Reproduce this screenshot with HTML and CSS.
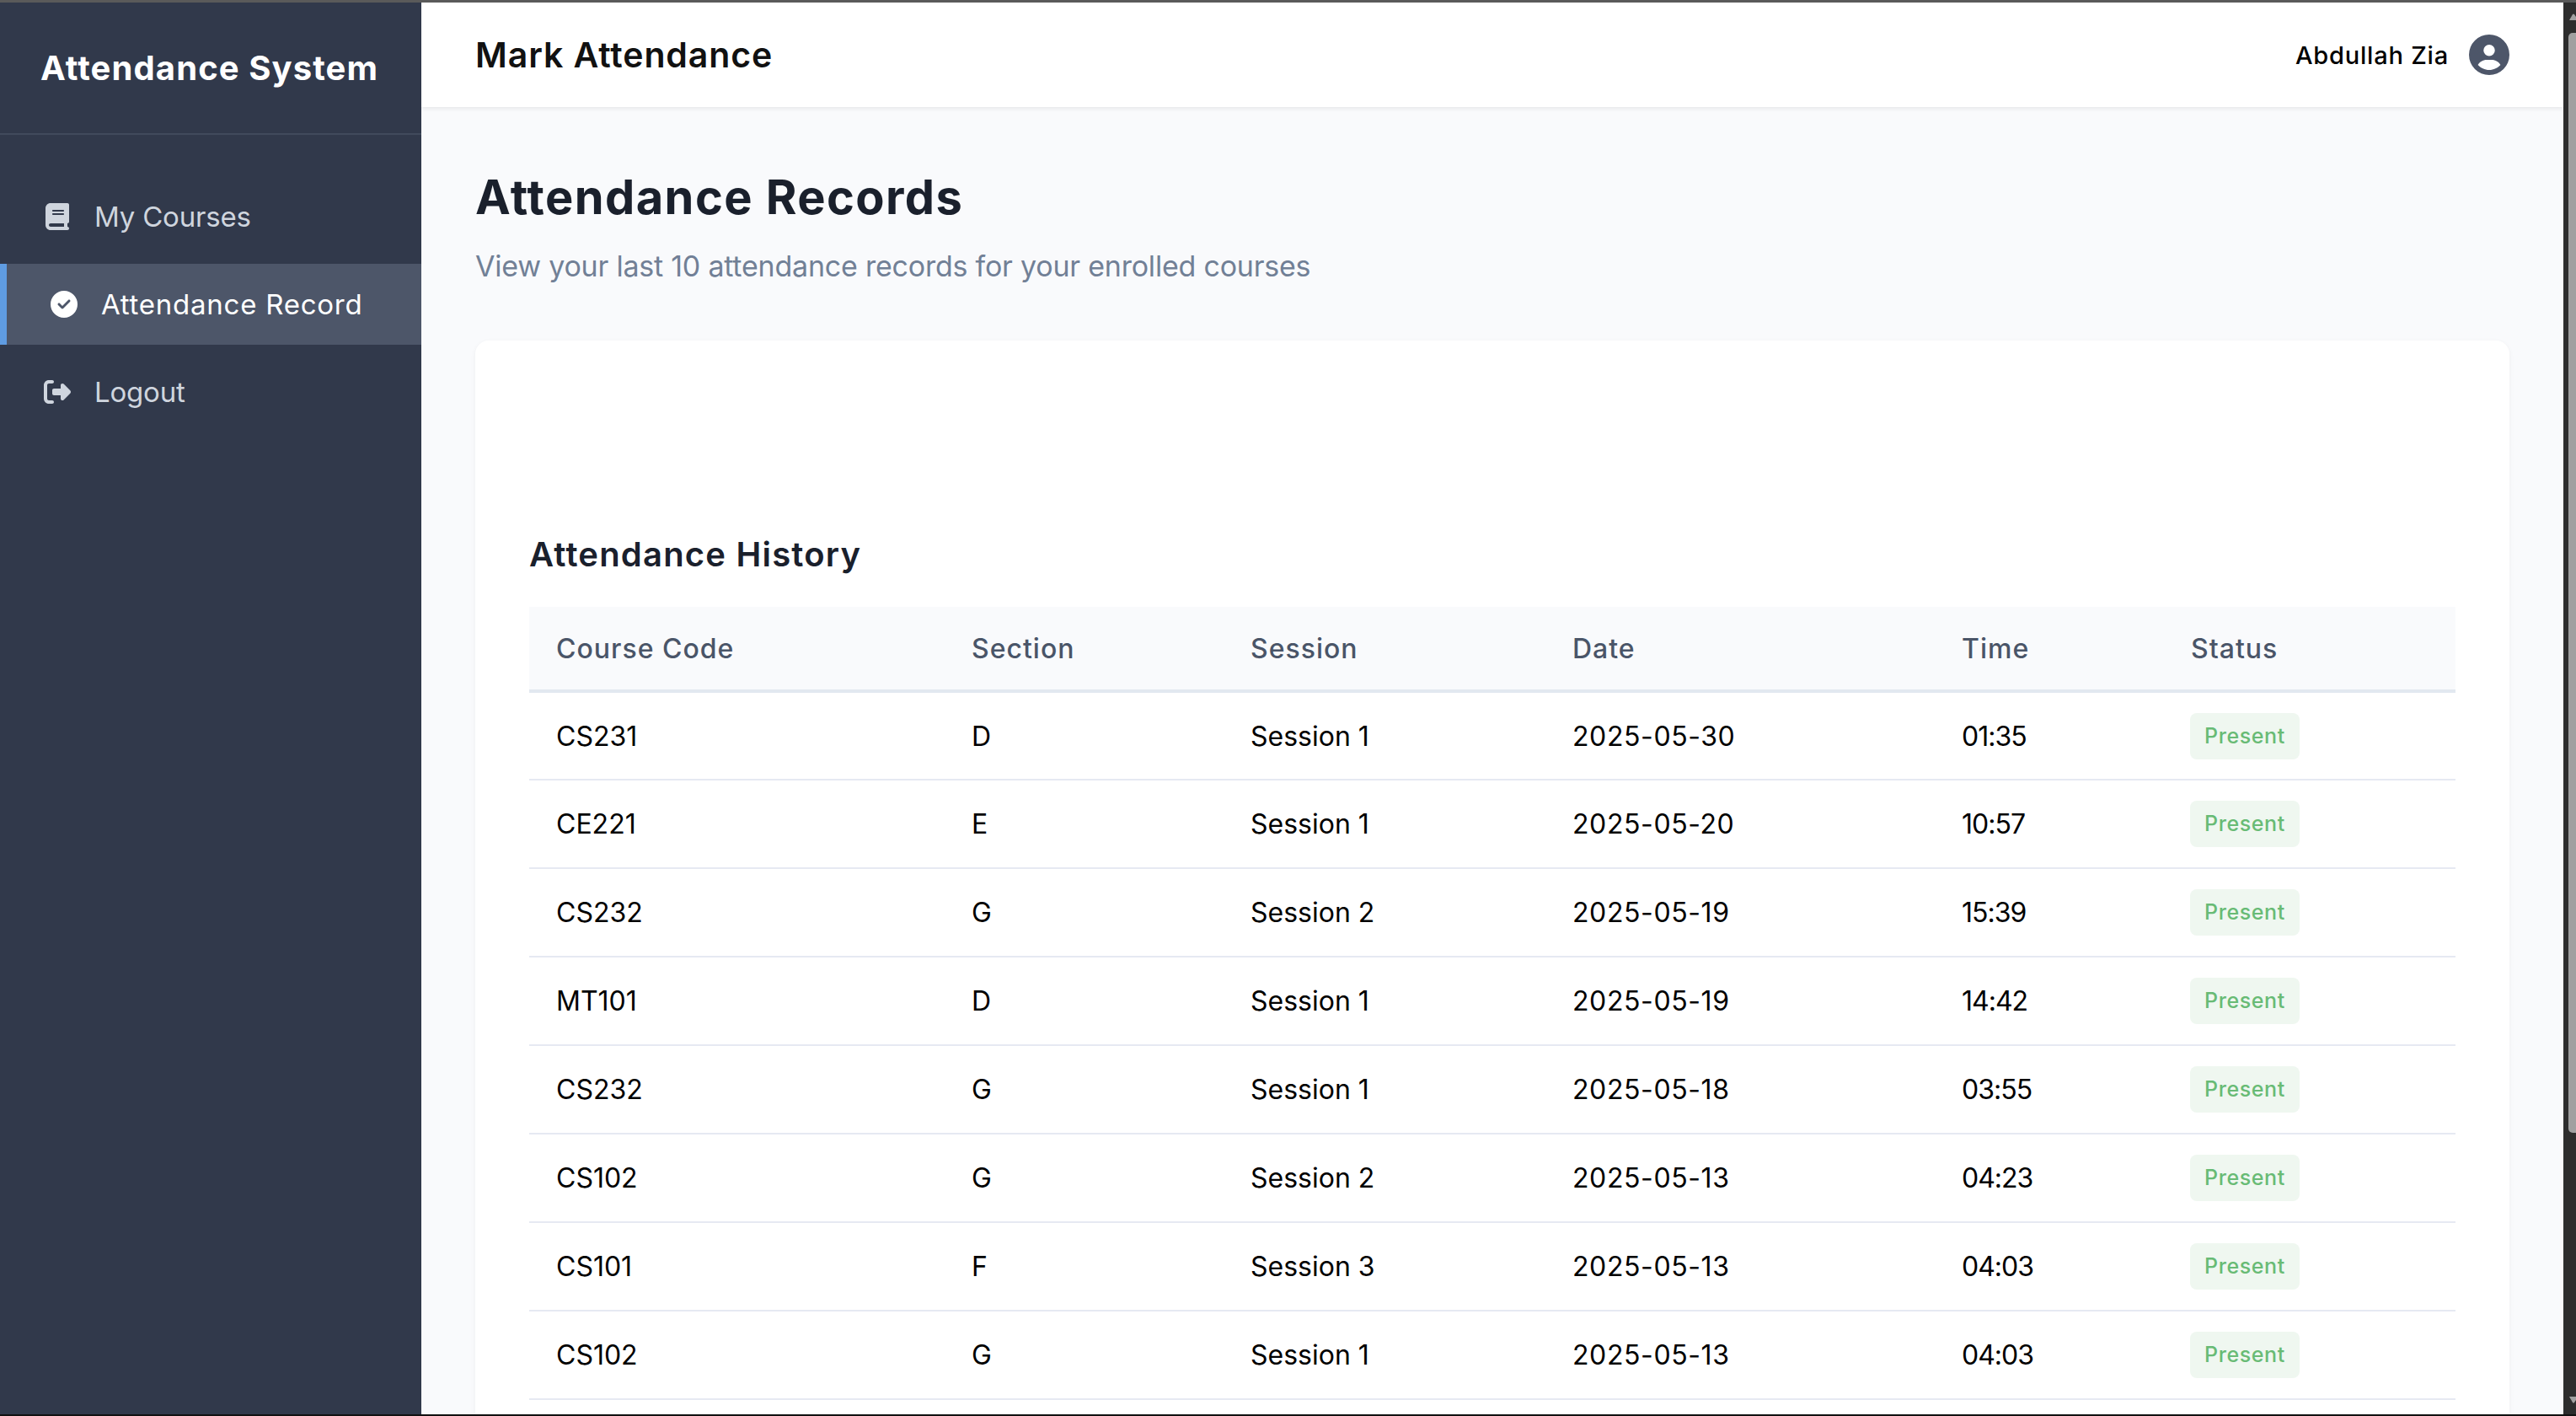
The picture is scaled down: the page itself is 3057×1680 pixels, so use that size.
FILE: index.html
```html
<!DOCTYPE html>
<html lang="en">
<head>
    <meta charset="UTF-8">
    <meta name="viewport" content="width=device-width, initial-scale=1.0">
    <title>Mark Attendance</title>
    <link rel="stylesheet" href="styles.css">
</head>
<body>
    <div class="window">
        <aside class="sidebar">
            <div class="logo">Attendance System</div>
            <nav class="nav">
                <a class="nav-item" href="#">
                    <span class="nav-icon">
                        <svg class="icon-book" viewBox="0 0 448 512"><path d="M96 0C43 0 0 43 0 96V416c0 53 43 96 96 96H384h32c17.7 0 32-14.3 32-32s-14.3-32-32-32V384c17.7 0 32-14.3 32-32V32c0-17.7-14.3-32-32-32H384 96zm0 384H352v64H96c-17.7 0-32-14.3-32-32s14.3-32 32-32zm32-240c0-8.8 7.2-16 16-16H336c8.8 0 16 7.2 16 16s-7.2 16-16 16H144c-8.8 0-16-7.2-16-16zm16 48H336c8.8 0 16 7.2 16 16s-7.2 16-16 16H144c-8.8 0-16-7.2-16-16s7.2-16 16-16z"/></svg>
                    </span>
                    My Courses
                </a>
                <a class="nav-item active" href="#">
                    <span class="nav-icon">
                        <svg class="icon-check" viewBox="0 0 512 512"><path d="M256 512A256 256 0 1 0 256 0a256 256 0 1 0 0 512zM369 209L241 337c-9.4 9.4-24.6 9.4-33.9 0l-64-64c-9.4-9.4-9.4-24.6 0-33.9s24.6-9.4 33.9 0l47 47L335 175c9.4-9.4 24.6-9.4 33.9 0s9.4 24.6 0 33.9z"/></svg>
                    </span>
                    Attendance Record
                </a>
                <a class="nav-item" href="#">
                    <span class="nav-icon">
                        <svg class="icon-logout" viewBox="0 32 512 448"><path d="M377.9 105.9L500.7 228.7c7.2 7.2 11.3 17.1 11.3 27.3s-4.1 20.1-11.3 27.3L377.9 406.1c-6.4 6.4-15 9.9-24 9.9c-18.7 0-33.9-15.2-33.9-33.9l0-62.1-128 0c-17.7 0-32-14.3-32-32l0-64c0-17.7 14.3-32 32-32l128 0 0-62.1c0-18.7 15.2-33.9 33.9-33.9c9 0 17.6 3.6 24 9.9zM160 96L96 96c-17.7 0-32 14.3-32 32l0 256c0 17.7 14.3 32 32 32l64 0c17.7 0 32 14.3 32 32s-14.3 32-32 32l-64 0c-53 0-96-43-96-96L0 128C0 75 43 32 96 32l64 0c17.7 0 32 14.3 32 32s-14.3 32-32 32z"/></svg>
                    </span>
                    Logout
                </a>
            </nav>
        </aside>

        <div class="main">
            <header class="topbar">
                <div class="topbar-title">Mark Attendance</div>
                <div class="user">
                    <span class="user-name">Abdullah Zia</span>
                    <svg class="user-icon" viewBox="0 0 512 512"><path d="M399 384.2C376.9 345.8 335.4 320 288 320H224c-47.4 0-88.9 25.8-111 64.2c35.2 39.2 86.2 63.8 143 63.8s107.8-24.7 143-63.8zM0 256a256 256 0 1 1 512 0A256 256 0 1 1 0 256zm256 16a72 72 0 1 0 0-144 72 72 0 1 0 0 144z"/></svg>
                </div>
            </header>

            <section class="content">
                <h1 class="page-title">Attendance Records</h1>
                <p class="page-sub">View your last 10 attendance records for your enrolled courses</p>

                <div class="card">
                    <h2 class="card-title">Attendance History</h2>
                    <table class="records">
                        <colgroup>
                            <col class="col-code"><col class="col-section"><col class="col-session">
                            <col class="col-date"><col class="col-time"><col class="col-status">
                        </colgroup>
                        <thead>
                            <tr><th>Course Code</th><th>Section</th><th>Session</th><th>Date</th><th>Time</th><th>Status</th></tr>
                        </thead>
                        <tbody>
                            <tr><td>CS231</td><td>D</td><td>Session 1</td><td class="cell-date">2025-05-30</td><td class="cell-time">01:35</td><td><span class="badge">Present</span></td></tr>
                            <tr><td>CE221</td><td>E</td><td>Session 1</td><td class="cell-date">2025-05-20</td><td class="cell-time">10:57</td><td><span class="badge">Present</span></td></tr>
                            <tr><td>CS232</td><td>G</td><td>Session 2</td><td class="cell-date">2025-05-19</td><td class="cell-time">15:39</td><td><span class="badge">Present</span></td></tr>
                            <tr><td>MT101</td><td>D</td><td>Session 1</td><td class="cell-date">2025-05-19</td><td class="cell-time">14:42</td><td><span class="badge">Present</span></td></tr>
                            <tr><td>CS232</td><td>G</td><td>Session 1</td><td class="cell-date">2025-05-18</td><td class="cell-time">03:55</td><td><span class="badge">Present</span></td></tr>
                            <tr><td>CS102</td><td>G</td><td>Session 2</td><td class="cell-date">2025-05-13</td><td class="cell-time">04:23</td><td><span class="badge">Present</span></td></tr>
                            <tr><td>CS101</td><td>F</td><td>Session 3</td><td class="cell-date">2025-05-13</td><td class="cell-time">04:03</td><td><span class="badge">Present</span></td></tr>
                            <tr><td>CS102</td><td>G</td><td>Session 1</td><td class="cell-date">2025-05-13</td><td class="cell-time">04:03</td><td><span class="badge">Present</span></td></tr>
                        </tbody>
                    </table>
                </div>
            </section>
        </div>

        <div class="scrollbar">
            <svg class="scroll-arrow" viewBox="0 0 9 10"><path d="M1 9 L5 2 Q6 1 7 2 L9 5 V9 Z"/></svg>
            <div class="scroll-thumb"></div>
            <svg class="scroll-arrow scroll-arrow-down" viewBox="0 0 9 10"><path d="M1 1 L5 8 Q6 9 7 8 L9 5 V1 Z"/></svg>
        </div>
    </div>
</body>
</html>
```

FILE: styles.css
```css
* {
    box-sizing: border-box;
}
html, body {
    margin: 0;
    height: 100%;
    overflow: hidden;
}
body {
    font-family: Inter, "Liberation Sans", sans-serif;
    background-color: #f9fafc;
    color: #000;
}
.window {
    display: flex;
    height: 1680px;
    border-top: 3px solid #5a5a5a;
    border-bottom: 2px solid #111;
}

/* sidebar */
.sidebar {
    width: 500px;
    flex-shrink: 0;
    background-color: #31394b;
}
.logo {
    height: 157px;
    padding: 53px 0 0 48px;
    border-bottom: 2px solid #414a5c;
    font-size: 40px;
    line-height: 50px;
    font-weight: 700;
    color: #fff;
    letter-spacing: 1.1px;
}
.nav {
    display: flex;
    flex-direction: column;
    gap: 8px;
    padding-top: 49px;
}
.nav-item {
    display: flex;
    align-items: center;
    height: 96px;
    padding-left: 48px;
    font-size: 33px;
    letter-spacing: -0.2px;
    color: #cfd5de;
    text-decoration: none;
}
.nav-item.active {
    border-left: 8px solid #5f9ce2;
    background-color: #4d5669;
    color: #fff;
    letter-spacing: 0.75px;
}
.nav-icon {
    display: flex;
    justify-content: center;
    width: 40px;
    margin-right: 24px;
}
.nav-icon svg {
    fill: currentColor;
    display: block;
}
.icon-book {
    width: 28px;
    height: 32px;
}
.icon-check {
    width: 32px;
    height: 32px;
}
.icon-logout {
    width: 32px;
    height: 28px;
}

/* top bar */
.main {
    flex: 1;
    min-width: 0;
    overflow: hidden;
}
.topbar {
    display: flex;
    justify-content: space-between;
    align-items: center;
    height: 124px;
    padding: 0 64px;
    background-color: #fff;
    box-shadow: 0 2px 5px rgba(0, 0, 0, 0.08);
    position: relative;
}
.topbar-title {
    font-size: 41px;
    font-weight: 600;
    color: #111;
    letter-spacing: 0.9px;
}
.user {
    display: flex;
    align-items: center;
    gap: 24px;
}
.user-name {
    font-size: 29px;
    font-weight: 500;
    letter-spacing: 0.8px;
}
.user-icon {
    width: 48px;
    height: 48px;
    fill: #4d5669;
}

/* page */
.content {
    padding: 77px 64px 0;
}
.page-title {
    margin: 0;
    font-size: 56px;
    line-height: 60px;
    font-weight: 700;
    color: #1a202c;
    letter-spacing: 1.4px;
}
.page-sub {
    margin: 32px 0 68px;
    font-size: 34px;
    line-height: 40px;
    color: #718096;
    letter-spacing: -0.22px;
}
.card {
    padding: 229px 64px 64px;
    background-color: #fff;
    border-radius: 16px;
    box-shadow: 0 2px 6px rgba(0, 0, 0, 0.05);
}
.card-title {
    margin: 0 0 37px;
    font-size: 40px;
    line-height: 50px;
    font-weight: 600;
    color: #1a202c;
    letter-spacing: 1.2px;
}

/* table */
.records {
    width: 100%;
    table-layout: fixed;
    border-collapse: collapse;
}
.col-code { width: 493px; }
.col-section { width: 331px; }
.col-session { width: 382px; }
.col-date { width: 462px; }
.col-time { width: 272px; }
.records th {
    height: 100px;
    padding: 0 31px 0 32px;
    text-align: left;
    font-size: 32px;
    font-weight: 500;
    color: #4a5568;
    background-color: #f9fafc;
    border-bottom: 4px solid #e2e8f0;
    letter-spacing: 1px;
}
.records td {
    height: 105px;
    padding: 0 31px 0 32px;
    font-size: 32px;
    border-bottom: 2px solid #e6e9f2;
}
.records td:last-child {
    padding-left: 31px;
}
.cell-date {
    letter-spacing: 0.6px;
}
.cell-time {
    letter-spacing: -1px;
}
.badge {
    display: inline-block;
    padding: 0 17px;
    line-height: 55px;
    font-size: 25px;
    font-weight: 500;
    color: #68bb75;
    background-color: #eff7f0;
    border-radius: 8px;
    vertical-align: middle;
    letter-spacing: 0.6px;
}

/* drawn scrollbar of the window */
.scrollbar {
    display: flex;
    flex-direction: column;
    align-items: flex-end;
    width: 15px;
    flex-shrink: 0;
    background-color: #2d2d2d;
}
.scroll-arrow {
    width: 9px;
    height: 10px;
    margin-top: 12px;
    fill: #a0a0a0;
}
.scroll-thumb {
    width: 9px;
    height: 1305px;
    margin-top: 14px;
    background-color: #a0a0a0;
    border-radius: 5px 0 0 5px;
}
.scroll-arrow-down {
    margin-top: auto;
    margin-bottom: 12px;
}
```
